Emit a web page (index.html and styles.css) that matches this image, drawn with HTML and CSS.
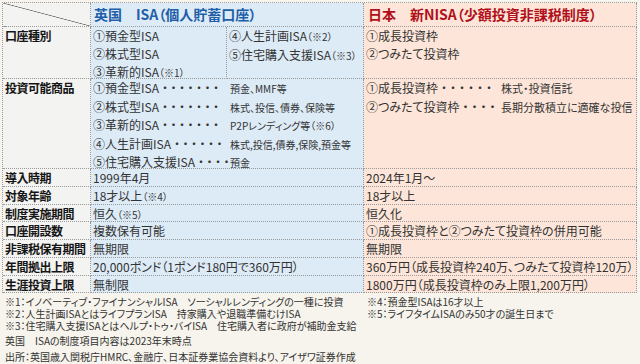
FILE: index.html
```html
<!DOCTYPE html>
<html lang="ja">
<head>
<meta charset="utf-8">
<title>英国ISAと日本新NISAの比較</title>
<link rel="stylesheet" href="styles.css">
</head>
<body>
<div class="page">
  <div class="grid">
    <div class="c lab corner"></div>
    <div class="c isa head span2">英国　ISA（個人貯蓄口座）</div>
    <div class="c nisa head nh">日本　新NISA（少額投資非課税制度）</div>

    <div class="c lab">口座種別</div>
    <div class="c isa"><p>①預金型ISA</p><p>②株式型ISA</p><p>③革新的ISA<small>（※1）</small></p></div>
    <div class="c isa"><p>④人生計画ISA<small>（※2）</small></p><p>⑤住宅購入支援ISA<small>（※3）</small></p></div>
    <div class="c nisa"><p>①成長投資枠</p><p>②つみたて投資枠</p></div>

    <div class="c lab">投資可能商品</div>
    <div class="c isa span2">
      <p class="prod"><span class="pl">①預金型ISA<span class="dots">・・・・・・・</span></span><span class="pv">預金、MMF等</span></p>
      <p class="prod"><span class="pl">②株式型ISA<span class="dots">・・・・・・・</span></span><span class="pv">株式、投信、債券、保険等</span></p>
      <p class="prod"><span class="pl">③革新的ISA<span class="dots">・・・・・・・</span></span><span class="pv">P2Pレンディング等（※6）</span></p>
      <p class="prod"><span class="pl">④人生計画ISA<span class="dots">・・・・・・</span></span><span class="pv">株式,投信,債券,保険,預金等</span></p>
      <p class="prod"><span class="pl">⑤住宅購入支援ISA<span class="dots">・・・・</span></span><span class="pv">預金</span></p>
    </div>
    <div class="c nisa">
      <p class="prod"><span class="pl nl">①成長投資枠<span class="dots nd">・・・・・・</span></span><span class="nv">株式・投資信託</span></p>
      <p class="prod"><span class="pl nl">②つみたて投資枠<span class="dots nd">・・・・</span></span><span class="nv">長期分散積立に適確な投信</span></p>
    </div>

    <div class="c lab">導入時期</div>
    <div class="c isa span2">1999年4月</div>
    <div class="c nisa">2024年1月～</div>

    <div class="c lab">対象年齢</div>
    <div class="c isa span2">18才以上<small>（※4）</small></div>
    <div class="c nisa">18才以上</div>

    <div class="c lab">制度実施期間</div>
    <div class="c isa span2">恒久<small>（※5）</small></div>
    <div class="c nisa">恒久化</div>

    <div class="c lab">口座開設数</div>
    <div class="c isa span2">複数保有可能</div>
    <div class="c nisa">①成長投資枠と②つみたて投資枠の併用可能</div>

    <div class="c lab">非課税保有期間</div>
    <div class="c isa span2">無期限</div>
    <div class="c nisa">無期限</div>

    <div class="c lab">年間拠出上限</div>
    <div class="c isa span2">20,000ポンド（1ポンド180円で360万円）</div>
    <div class="c nisa">360万円（成長投資枠240万、つみたて投資枠120万）</div>

    <div class="c lab">生涯投資上限</div>
    <div class="c isa span2">無制限</div>
    <div class="c nisa">1800万円（成長投資枠のみ上限1,200万円）</div>
  </div>

  <div class="notes">
    <div class="ncol">
      <p>※1：イノベーティブ・ファイナンシャルISA　ソーシャルレンディングの一種に投資</p>
      <p>※2：人生計画ISAとはライフプランISA　持家購入や退職準備むけISA</p>
      <p>※3：住宅購入支援ISAとはヘルプ・トゥ・バイISA　住宅購入者に政府が補助金支給</p>
    </div>
    <div class="ncol">
      <p>※4：預金型ISAは16才以上</p>
      <p>※5：ライフタイムISAのみ50才の誕生日まで</p>
    </div>
  </div>
  <p class="note2">英国　ISAの制度項目内容は2023年末時点</p>
  <p class="note2">出所：英国歳入関税庁HMRC、金融庁、日本証券業協会資料より、アイザワ証券作成</p>
</div>
</body>
</html>
```

FILE: styles.css
```css
* { box-sizing: border-box; }
html, body { margin: 0; padding: 0; }
body {
  background: #f6f4ec;
  font-family: "Noto Sans CJK JP", "Noto Sans", sans-serif;
  font-feature-settings: "palt";
  color: #333;
  width: 640px;
  height: 364px;
  overflow: hidden;
}
p { margin: 0; }
.page { padding: 2px 3px 0 2px; }

.grid {
  display: grid;
  grid-template-columns: 88px 136px 137px 1fr;
  grid-template-rows: 24px 52px 90px 18px 18px 17px 18px 18px 18px 17px;
  border-top: 1px dotted #9a9a9a;
  border-left: 1px dotted #9a9a9a;
}
.c {
  border-right: 1px dotted #9a9a9a;
  border-bottom: 1px dotted #9a9a9a;
  font-size: 12px;
  line-height: 17px;
  padding-left: 2px;
  white-space: nowrap;
  overflow: hidden;
}
.c p { line-height: 18px; }
.c p.prod { line-height: 17.6px; }
.span2 { grid-column: span 2; }

.lab {
  background: #f3f3f1;
  font-weight: 700;
  color: #151515;
  letter-spacing: -0.5px;
}
.lab:not(.corner) { line-height: 18px; }
.corner {
  background:
    linear-gradient(to top right, transparent calc(50% - 0.7px), #6a6a6a 50%, transparent calc(50% + 0.7px)),
    #f3f3f1;
}
.isa { background: #ddebf7; }
.nisa { background: #fde6d9; }

.head {
  font-size: 14px;
  font-weight: 700;
  line-height: 23px;
  padding-left: 3px;
  color: #1f5ea8;
  letter-spacing: 0;
}
.nh { color: #b0101a; padding-left: 4px; }

small { font-size: 10px; }

.prod { display: flex; align-items: baseline; }
.pl { min-width: 137px; flex: none; white-space: nowrap; }
.nl { min-width: 135px; }
.dots { font-feature-settings: normal; letter-spacing: -3.5px; }
.nd { letter-spacing: -3px; }
.pv { font-size: 10px; }
.nv { font-size: 11px; }

.notes {
  display: grid;
  grid-template-columns: 362px 1fr;
  padding: 3px 0 0 3px;
  font-size: 10px;
  color: #333;
}
.notes p { line-height: 12px; white-space: nowrap; }
.note2 {
  font-size: 10px;
  line-height: 15.5px;
  padding-left: 3px;
  color: #333;
  white-space: nowrap;
}
.notes + .note2 { margin-top: 1px; }
```
